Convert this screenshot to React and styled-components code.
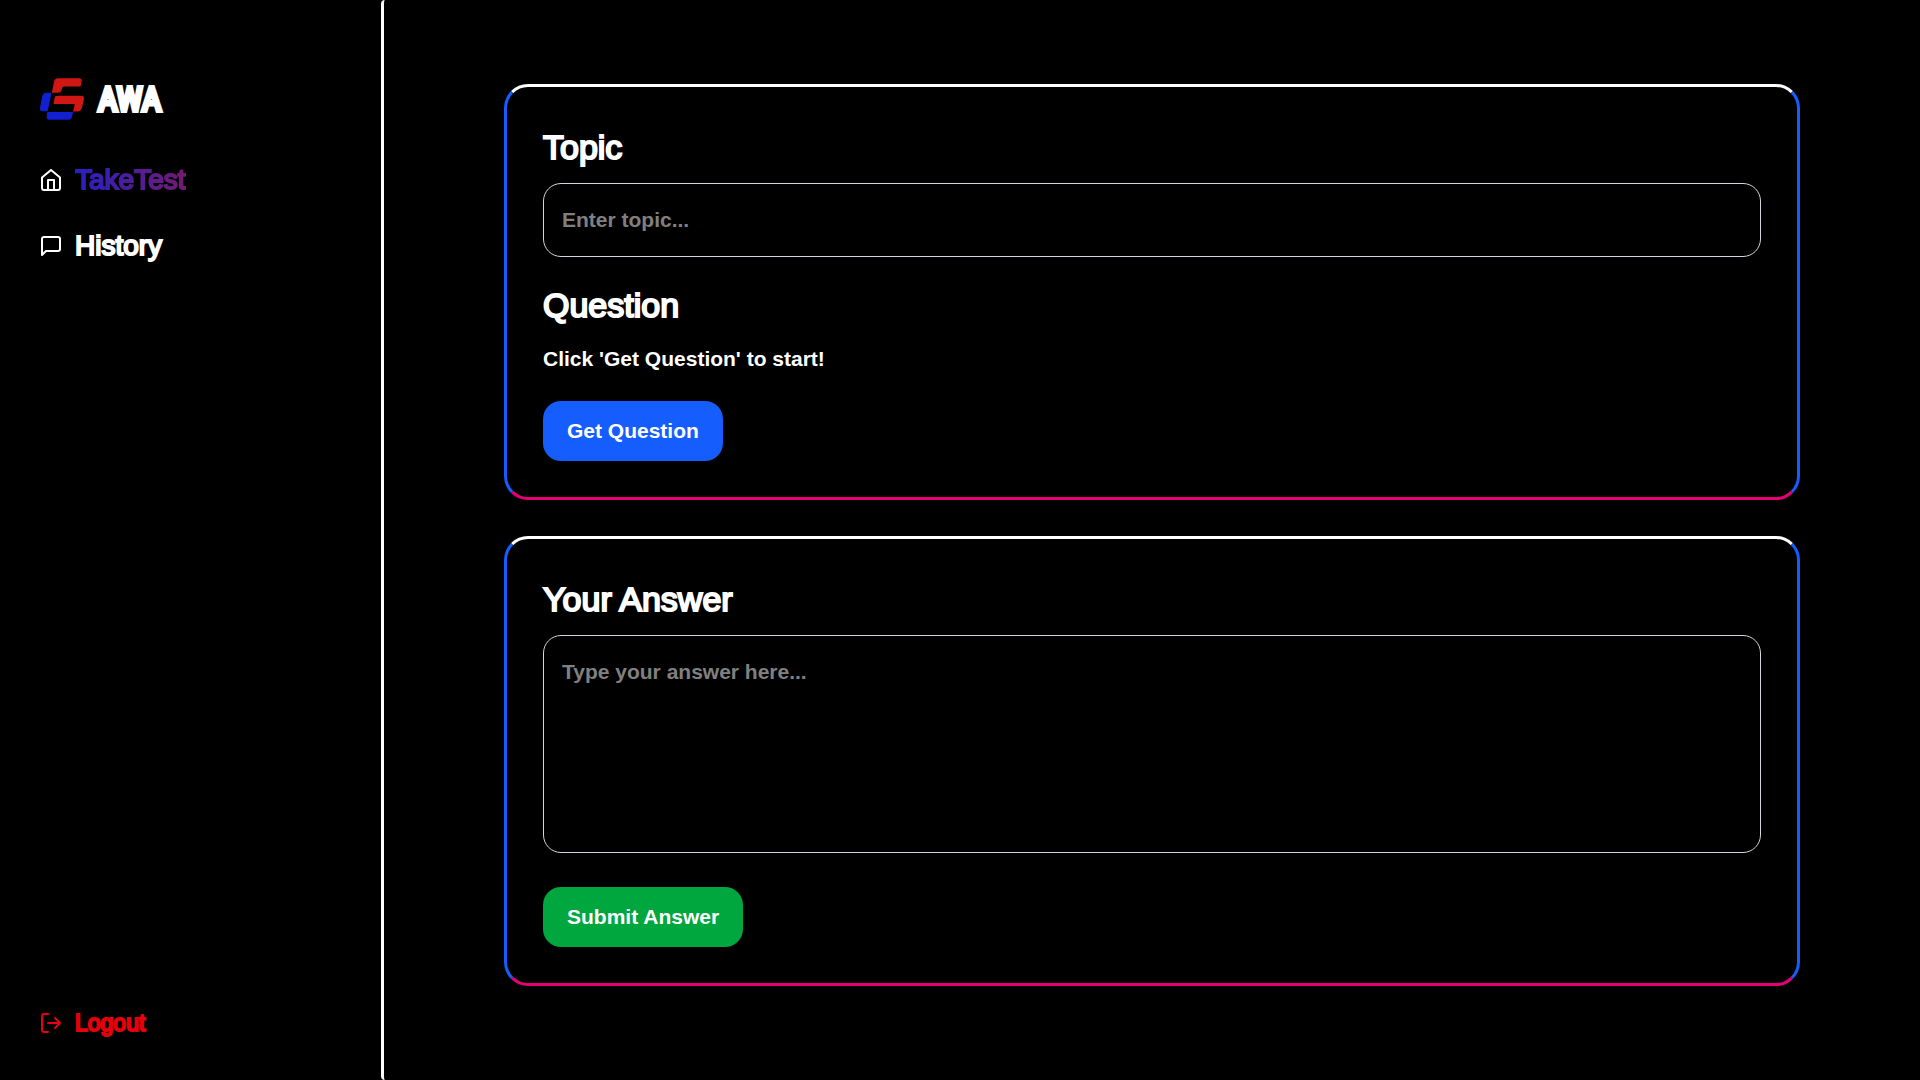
import React from "react";
import styled, { createGlobalStyle, css } from "styled-components";

const GlobalStyle = createGlobalStyle`
  *, *::before, *::after { box-sizing: border-box; }
  body {
    margin: 0;
    background: #000;
    color: #fff;
    font-family: "Liberation Sans", Arial, sans-serif;
  }
  h1, h2, p { margin: 0; }
`;

const Page = styled.div`
  display: flex;
  min-height: 100vh;
`;

const Sidebar = styled.aside`
  display: flex;
  flex-direction: column;
  justify-content: space-between;
  width: calc(20% - 3px);
  padding: 72px 40px 36px;
`;

const Brand = styled.div`
  display: flex;
  align-items: center;
  gap: 14px;
  height: 54px;
  margin-bottom: 30px;
`;

const BrandName = styled.h1`
  font-family: "Liberation Sans Narrow", "Roboto Condensed", "Liberation Sans", sans-serif;
  font-size: 34px;
  font-weight: 400;
  line-height: 48px;
  -webkit-text-stroke: 4px currentColor;
`;

const Nav = styled.nav`
  display: flex;
  flex-direction: column;
  gap: 18px;
`;

const itemStyle = css`
  display: flex;
  align-items: center;
  gap: 13px;
  height: 48px;
  padding: 0;
  border: 0;
  background: none;
  font-family: inherit;
  font-weight: 400;
  -webkit-text-stroke: 2px currentColor;
  text-decoration: none;
  cursor: pointer;
`;

const NavLink = styled.a`
  ${itemStyle}
  color: #fff;
  font-size: 28px;
`;

const NavLabel = styled.span`
  ${(p) =>
    p.$active &&
    css`
      background: linear-gradient(to right, #2720c4, #741a72);
      background-clip: text;
      color: transparent;
      -webkit-text-stroke: 2px transparent;
    `}
`;

const LogoutButton = styled.button`
  ${itemStyle}
  height: 42px;
  color: #e7000b;
  font-size: 23px;
`;

const Icon = styled.svg`
  width: 22px;
  height: 22px;
  flex: none;
  fill: none;
  stroke: currentColor;
  stroke-width: 2;
  stroke-linecap: round;
  stroke-linejoin: round;
`;

const Main = styled.main`
  display: flex;
  flex: 1;
  flex-direction: column;
  gap: 36px;
  min-width: 0;
  padding: 84px 120px;
  border-left: 3px solid #fff;
  border-radius: 4px 0 0 4px;
`;

const Card = styled.section`
  display: flex;
  flex-direction: column;
  align-items: flex-start;
  gap: 12px;
  padding: 36px;
  border: 3px solid #155dfc;
  border-top-color: #fff;
  border-bottom-color: #e60076;
  border-radius: 24px;
`;

const headingStyle = css`
  font-size: 34px;
  font-weight: 400;
  line-height: 48px;
  -webkit-text-stroke: 2px currentColor;
`;

const Heading = styled.h2`
  ${headingStyle}
`;

const HeadingLabel = styled.label`
  ${headingStyle}
`;

const bodyStyle = css`
  font-family: inherit;
  font-size: 21px;
  font-weight: 700;
  line-height: 36px;
`;

const Prompt = styled.p`
  ${bodyStyle}
`;

const fieldStyle = css`
  ${bodyStyle}
  display: block;
  width: 100%;
  padding: 18px;
  border: 1px solid #d1d5dc;
  border-radius: 18px;
  outline: 0;
  background: transparent;
  color: #fff;

  &::placeholder {
    color: #808080;
    opacity: 1;
  }
`;

const TextInput = styled.input`
  ${fieldStyle}
  height: 74px;
  margin-bottom: 12px;
`;

const TextArea = styled.textarea`
  ${fieldStyle}
  height: 218px;
  margin-bottom: 10px;
  resize: none;
`;

const Button = styled.button`
  ${bodyStyle}
  height: 60px;
  margin-top: 12px;
  padding: 0 24px;
  border: 0;
  border-radius: 18px;
  background: ${(p) => p.$color};
  color: #fff;
  cursor: pointer;
`;

const Logo = () => (
  <svg width="44" height="42" viewBox="60 54 133 126" aria-hidden="true">
    <path
      fill="#d01714"
      d="M96 98 L102 66 Q104 54 115 54 H178 Q187 54 186 62 L183 79 H132 Q128 79 127 84 L125 90 Q123 98 114 98 Z"
    />
    <path
      fill="#d01714"
      d="M101 132 L104 114 Q105 107 112 107 H183 Q194 107 193 116 L187 143 Q184 155 173 155 H160 L165 132 Z"
    />
    <path fill="#1120d0" d="M95 98 L83 154 H68 Q59 154 60 145 L66 111 Q69 98 80 98 Z" />
    <path fill="#1120d0" d="M82 156 H160 L157 170 Q155 180 145 180 H89 Q79 180 80 171 Z" />
  </svg>
);

const HomeIcon = () => (
  <Icon viewBox="1 1 22 22" aria-hidden="true">
    <path d="M3 9.5 12 2l9 7.5V20a2 2 0 0 1-2 2H5a2 2 0 0 1-2-2z" />
    <path d="M9 22V12h6v10" />
  </Icon>
);

const MessageIcon = () => (
  <Icon viewBox="1 1 22 22" aria-hidden="true">
    <path d="M21 15a2 2 0 0 1-2 2H7l-4 4V5a2 2 0 0 1 2-2h14a2 2 0 0 1 2 2z" />
  </Icon>
);

const LogoutIcon = () => (
  <Icon viewBox="1 1 22 22" aria-hidden="true">
    <path d="M9 21H5a2 2 0 0 1-2-2V5a2 2 0 0 1 2-2h4" />
    <path d="M16 17l5-5-5-5M21 12H9" />
  </Icon>
);

export default function App() {
  return (
    <>
      <GlobalStyle />
      <Page>
        <Sidebar>
          <div>
            <Brand>
              <Logo />
              <BrandName>AWA</BrandName>
            </Brand>
            <Nav>
              <NavLink href="#test">
                <HomeIcon />
                <NavLabel $active>TakeTest</NavLabel>
              </NavLink>
              <NavLink href="#history">
                <MessageIcon />
                <NavLabel>History</NavLabel>
              </NavLink>
            </Nav>
          </div>
          <LogoutButton type="button">
            <LogoutIcon />
            Logout
          </LogoutButton>
        </Sidebar>
        <Main>
          <Card>
            <HeadingLabel htmlFor="topic">Topic</HeadingLabel>
            <TextInput id="topic" type="text" placeholder="Enter topic..." />
            <Heading>Question</Heading>
            <Prompt>Click 'Get Question' to start!</Prompt>
            <Button type="button" $color="#155dfc">
              Get Question
            </Button>
          </Card>
          <Card>
            <HeadingLabel htmlFor="answer">Your Answer</HeadingLabel>
            <TextArea id="answer" placeholder="Type your answer here..." />
            <Button type="button" $color="#00a63e">
              Submit Answer
            </Button>
          </Card>
        </Main>
      </Page>
    </>
  );
}
